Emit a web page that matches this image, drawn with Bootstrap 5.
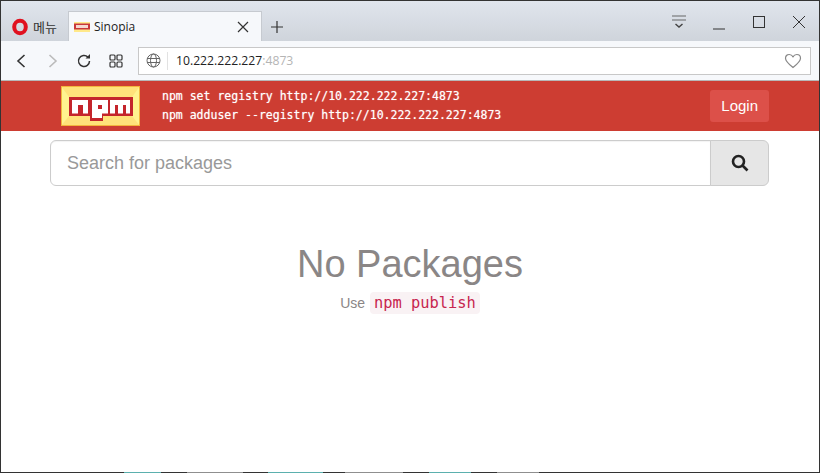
<!DOCTYPE html>
<html lang="ko">
<head>
  <meta charset="UTF-8">
  <meta name="viewport" content="width=device-width, initial-scale=1.0">
  <title>Sinopia</title>
  <link href="https://cdn.jsdelivr.net/npm/bootstrap@5.3.1/dist/css/bootstrap.min.css" rel="stylesheet">
  <style>
    html, body { height: 100%; overflow: hidden; background: #fff; }
    body { font-family: "Liberation Sans", Arial, sans-serif; }
    .browser-window { height: 473px; border: 1px solid #333; position: relative; }
    /* desktop showing through at the window's bottom edge */
    .browser-window::after { content: ""; position: absolute; left: -1px; right: -1px; bottom: -1px; height: 1px;
      background: linear-gradient(to right, #333 124px, #5bb0ae 124px, #5bb0ae 161px, #333 161px, #333 187px, #8f8f8f 187px, #8f8f8f 243px, #333 243px, #333 268px, #5bb0ae 268px, #5bb0ae 323px, #333 323px, #333 345px, #8f8f8f 345px, #8f8f8f 403px, #333 403px, #333 429px, #5bb0ae 429px, #5bb0ae 471px, #333 471px, #333 497px, #8f8f8f 497px, #8f8f8f 539px, #333 539px); }
    .tab-strip { height: 40px; background: linear-gradient(to bottom, #e0e5ed, #cfd4db); }
    .opera-menu { width: 67px; padding-left: 10px; padding-top: 17px; font: 13px/18px "Noto Sans CJK KR", sans-serif; color: #333; }
    .page-tab { width: 194px; height: 30px; background: #f6f8fb; border: 1px solid #c6cad0; border-bottom: 0; font: 12px "Open Sans", sans-serif; color: #222; padding: 0 8px 0 5px; }
    .new-tab { width: 30px; padding-top: 20px; }
    .win-btn { width: 40px; padding-top: 9px; }
    .tool-strip { height: 39px; background: #f6f8fb; padding: 0 8px 0 0; }
    .tool-btn { width: 32px; }
    .tool-narrow { width: 31px; }
    .addr-box { height: 28px; background: #fff; border: 1px solid #c8c8c8; font: 12.2px/28px "Open Sans", sans-serif; color: #222; margin-left: 6px; }
    .addr-globe { width: 29px; border-right: 1px solid #e2e2e2; height: 18px; }
    .addr-url { padding-top: 1px; }
    .addr-port { color: #b5b5b5; }
    .site-head { height: 51px; background: #cd3d32; border-top: 1px solid #b8b8b8; padding: 0 50px 0 60px; }
    .setup-text { font: 11.5px/19px "DejaVu Sans Mono", monospace; color: #fff; margin-left: 22px; text-shadow: 0 0 1px rgba(255,255,255,.6); }
    .login-btn { background: #dc5049; color: #fff; font-size: 15px; padding: 5px 11px; height: 32px; border: 0; border-radius: 3px; }
    .search-row { padding: 9px 50px 0 49px; }
    .search-row .form-control { height: 46px; font-size: 18px; padding-left: 16px; border-color: #ccc; border-radius: 6px 0 0 6px; box-shadow: inset 0 1px 1px rgba(0,0,0,.05); }
    .search-row .form-control::placeholder { color: #999; }
    .search-btn { width: 59px; background: #e6e6e6; border: 1px solid #ccc; border-radius: 0 6px 6px 0; }
    .empty-title { font-size: 38px; line-height: 43px; color: #8a8686; margin: 57px 0 7px; font-weight: 400; }
    .empty-hint { font-size: 14px; color: #8a8686; }
    .empty-hint code { font: 15.4px "DejaVu Sans Mono", monospace; color: #c7254e; background: #f9f2f4; padding: 2px 4px; border-radius: 4px; margin-left: 1px; }
  </style>
</head>
<body>
  <div class="browser-window d-flex flex-column">
    <!-- browser tabs -->
    <div class="tab-strip d-flex align-items-end">
      <div class="opera-menu d-flex align-self-stretch gap-1">
        <svg width="18" height="18" viewBox="0 0 18 18" class="flex-shrink-0"><ellipse cx="9" cy="9" rx="5.800" ry="6.200" fill="none" stroke="#e0111f" stroke-width="4"/></svg>
        <span>메뉴</span>
      </div>
      <div class="page-tab d-flex align-items-center">
        <svg width="16" height="10" viewBox="0 0 16 10" class="me-1"><rect width="16" height="10" fill="#ffe98a"/><rect y="1.500" width="16" height="6" fill="#c8363a"/><rect x="2" y="3" width="12" height="3" fill="#f5d7d0"/></svg>
        <span>Sinopia</span>
        <svg width="12" height="12" viewBox="0 0 12 12" class="ms-auto me-1"><path d="M1 1l10 10M11 1L1 11" stroke="#333" stroke-width="1.200"/></svg>
      </div>
      <div class="new-tab align-self-stretch text-center">
        <svg width="12" height="12" viewBox="0 0 12 12" class="d-block mx-auto"><path d="M6 0v12M0 6h12" stroke="#333" stroke-width="1.200"/></svg>
      </div>
      <div class="win-btn align-self-stretch ms-auto text-center">
        <svg width="16" height="16" viewBox="0 0 16 16"><path d="M1 1h14M1 5h14" stroke="#666"/><path d="M4.500 9l3.500 3 3.500-3" fill="none" stroke="#444" stroke-width="1.500"/></svg>
      </div>
      <div class="win-btn align-self-stretch text-center">
        <svg width="14" height="16" viewBox="0 0 14 16"><path d="M1 14h12" stroke="#333"/></svg>
      </div>
      <div class="win-btn align-self-stretch text-center">
        <svg width="14" height="16" viewBox="0 0 14 16"><rect x="1.500" y="1.500" width="11" height="11" fill="none" stroke="#333"/></svg>
      </div>
      <div class="win-btn align-self-stretch text-center">
        <svg width="14" height="16" viewBox="0 0 14 16"><path d="M1 1l12 12M13 1L1 13" stroke="#333"/></svg>
      </div>
    </div>
    <!-- browser toolbar -->
    <div class="tool-strip d-flex align-items-center">
      <div class="tool-btn text-center ms-1"><svg width="12" height="16" viewBox="0 0 12 16"><path d="M9.500 2L3 8l6.500 6" fill="none" stroke="#333" stroke-width="1.600"/></svg></div>
      <div class="tool-narrow text-center"><svg width="12" height="16" viewBox="0 0 12 16"><path d="M2.500 2L9 8l-6.500 6" fill="none" stroke="#bbb" stroke-width="1.600"/></svg></div>
      <div class="tool-btn text-center"><svg width="16" height="16" viewBox="0 0 16 16"><path d="M13.500 8a5.500 5.500 0 1 1-1.600-3.900" fill="none" stroke="#333" stroke-width="1.500"/><path d="M14 1v4.500H9.500z" fill="#333"/></svg></div>
      <div class="tool-btn text-center"><svg width="14" height="14" viewBox="0 0 14 14" fill="none" stroke="#333" stroke-width="1.200"><rect x="1" y="1" width="5" height="5" rx="1"/><rect x="8" y="1" width="5" height="5" rx="1"/><rect x="1" y="8" width="5" height="5" rx="1"/><rect x="8" y="8" width="5" height="5" rx="1"/></svg></div>
      <div class="addr-box flex-grow-1 d-flex align-items-center">
        <div class="addr-globe d-flex align-items-center justify-content-center me-2">
          <svg width="15" height="15" viewBox="0 0 15 15" fill="none" stroke="#666"><circle cx="7.500" cy="7.500" r="6.500"/><ellipse cx="7.500" cy="7.500" rx="3" ry="6.500"/><path d="M1 5.500h13M1 9.500h13"/></svg>
        </div>
        <span class="addr-url">10.222.222.227<span class="addr-port">:4873</span></span>
        <svg width="18" height="16" viewBox="0 0 18 16" class="ms-auto me-2"><path d="M9 14.500C4 10.500 1.500 8 1.500 5.200 1.500 3 3.200 1.500 5.200 1.500 6.800 1.500 8.200 2.400 9 3.800 9.800 2.400 11.200 1.500 12.800 1.500c2 0 3.700 1.500 3.700 3.700 0 2.800-2.500 5.300-7.500 9.300z" fill="none" stroke="#888" stroke-width="1.200"/></svg>
      </div>
    </div>
    <!-- site header -->
    <nav class="site-head d-flex align-items-center flex-shrink-0">
      <svg width="79" height="40" viewBox="0 0 79 40" class="flex-shrink-0">
        <rect width="79" height="40" fill="#fff38f"/>
        <path d="M0 0h79L71 11H8z" fill="#ffe27a"/>
        <path d="M0 40h79L71 30H8z" fill="#ffe27a"/>
        <rect x=".5" y=".5" width="78" height="39" fill="none" stroke="#f2b63c"/>
        <path d="M8 11h64v19H42v5H29v-5H8z" fill="#c4252b"/>
        <path d="M11 14h16v13.500h-5V19h-5v8.500h-6zM31 14h16v13.500h-6V32H31zM37 19v4h4v-4zM49 14h20v13.500h-4V19h-3v8.500h-5V19h-3v8.500h-5z" fill="#fff"/>
      </svg>
      <div class="setup-text">
        <div>npm set registry http://10.222.222.227:4873</div>
        <div>npm adduser --registry http://10.222.222.227:4873</div>
      </div>
      <button type="button" class="btn login-btn ms-auto">Login</button>
    </nav>
    <!-- search -->
    <div class="search-row">
      <div class="input-group">
        <input type="text" class="form-control" placeholder="Search for packages">
        <button type="button" class="search-btn d-flex align-items-center justify-content-center">
          <svg width="18" height="18" viewBox="0 0 18 18" fill="none" stroke="#222" stroke-width="2.600"><circle cx="7.500" cy="7.500" r="5.500"/><path d="M11.500 11.500l5 5"/></svg>
        </button>
      </div>
    </div>
    <!-- empty state -->
    <div class="text-center">
      <h1 class="empty-title">No Packages</h1>
      <div class="empty-hint">Use <code>npm publish</code></div>
    </div>
  </div>

  <script src="https://cdn.jsdelivr.net/npm/bootstrap@5.3.1/dist/js/bootstrap.bundle.min.js"></script>
</body>
</html>
